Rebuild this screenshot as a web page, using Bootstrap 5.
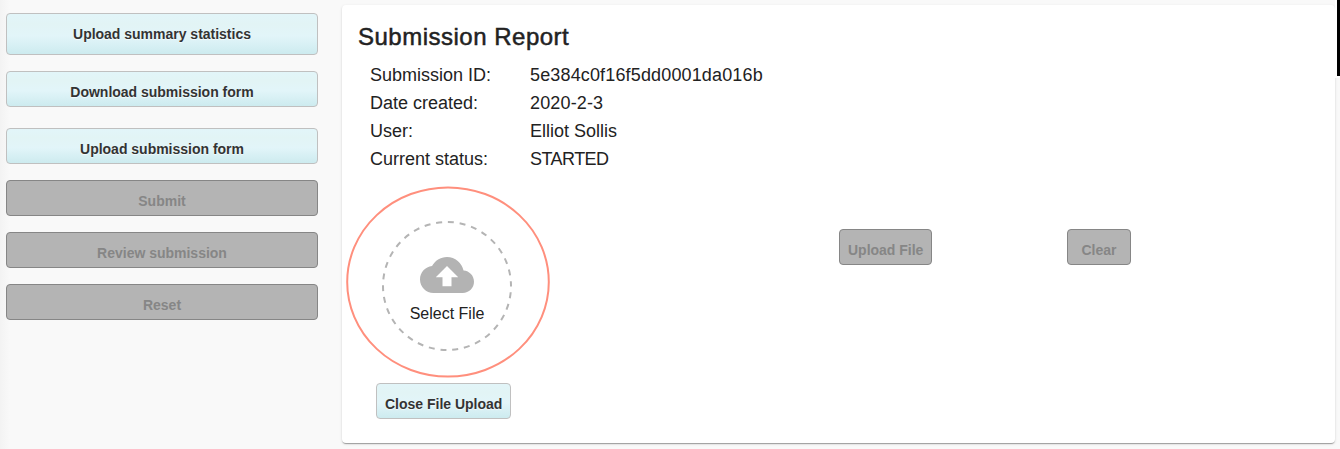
<!DOCTYPE html>
<html lang="en">
<head>
<meta charset="utf-8">
<meta name="viewport" content="width=device-width, initial-scale=1">
<title>Submission Report</title>
<link href="https://cdn.jsdelivr.net/npm/bootstrap@5.3.0/dist/css/bootstrap.min.css" rel="stylesheet">
<style>
body{height:449px;font-family:"Liberation Sans",Arial,sans-serif;color:#222;background:linear-gradient(90deg,#f3f3f3 0,#f9f9f9 10px,#f9f9f9 100%)}
.side{width:312px;margin:13px 0 0 6px}
.act{height:36px;padding:5px 8px 0;font-size:14px;font-weight:700;line-height:30px;letter-spacing:-.01px;border:1px solid #c0c0c0;border-radius:4px;color:#333;background:linear-gradient(#e2f5f9 0,#e2f4f5 25%,#e2f5f9 55%,#cdebef 100%);text-shadow:0 1px 1px rgba(255,255,255,.7);white-space:nowrap}
.act.tall{height:42px;padding:0 8px 1px}
.act:disabled{background:#b4b4b4;border-color:#868686;color:#868686;opacity:1;text-shadow:none}
.gap-form{margin-top:21px}
.panel{width:993px;height:438px;margin:5px 0 0 24px;padding:0 16px;border:0;border-radius:4px;box-shadow:0 2px 1px -1px rgba(0,0,0,.2),0 1px 1px rgba(0,0,0,.14),0 1px 3px rgba(0,0,0,.12)}
.title{font-size:24px;line-height:32px;font-weight:400;letter-spacing:.5px;margin:16px 0 8px;-webkit-text-stroke:.5px #222;white-space:nowrap}
.facts{display:grid;grid-template-columns:160px 1fr;grid-auto-rows:28px;font-size:18px;line-height:28px;margin:0 0 0 12px}
.facts dt{font-weight:400}
.facts dd,.facts dt{margin:0;white-space:nowrap}
.facts .code{letter-spacing:.15px}
.facts .state{letter-spacing:-.55px}
.upload{height:192px;margin-top:13px;margin-left:-12px}
.upload .act{margin-top:43px}
.send{width:93px;margin-left:289px}
.clear{width:64px;margin-left:135px}
.close-up{width:135px;margin:5px 0 0 18px}
.ring{width:204px;height:192px}
.ring .outline{left:0;top:0}
.drop{width:130px;height:130px;margin:8px 0 0 -2px}
.drop .cloud{margin-top:27px}
.drop .cap{font-size:16px;line-height:20px;margin-top:2px;white-space:nowrap}
.edge{right:0;top:0;width:5px;height:78px;background:#fff}
.edge::after{content:"";position:absolute;right:0;top:0;width:3px;height:76px;background:#000}
</style>
</head>
<body class="overflow-hidden position-relative">
<div class="d-flex align-items-start">
  <aside class="side d-flex flex-column flex-shrink-0">
    <button class="btn act tall w-100">Upload summary statistics</button>
    <button class="btn act w-100 mt-3">Download submission form</button>
    <button class="btn act w-100 gap-form">Upload submission form</button>
    <button class="btn act w-100 mt-3" disabled>Submit</button>
    <button class="btn act w-100 mt-3" disabled>Review submission</button>
    <button class="btn act w-100 mt-3" disabled>Reset</button>
  </aside>
  <main class="card panel flex-shrink-0">
    <h1 class="title">Submission Report</h1>
    <dl class="facts">
      <dt>Submission ID:</dt><dd class="code">5e384c0f16f5dd0001da016b</dd>
      <dt>Date created:</dt><dd class="code">2020-2-3</dd>
      <dt>User:</dt><dd>Elliot Sollis</dd>
      <dt>Current status:</dt><dd class="state">STARTED</dd>
    </dl>
    <div class="upload d-flex align-items-start">
      <div class="ring position-relative d-flex justify-content-center align-items-center flex-shrink-0">
        <svg class="outline position-absolute" width="204" height="192" viewBox="0 0 204 192"><ellipse cx="102" cy="96" rx="100.8" ry="94.6" fill="none" stroke="#ff8f7d" stroke-width="2"/></svg>
        <div class="drop position-relative d-flex flex-column align-items-center">
          <svg class="outline position-absolute" width="130" height="130" viewBox="0 0 130 130"><circle cx="65" cy="65" r="64" fill="none" stroke="#b4b4b4" stroke-width="2" stroke-dasharray="6 5.827" stroke-dashoffset="5.5"/></svg>
          <svg class="cloud" width="54" height="54" viewBox="0 0 24 24" fill="#b3b3b3"><path d="M19.35 10.04C18.67 6.59 15.64 4 12 4 9.11 4 6.6 5.64 5.35 8.04 2.34 8.36 0 10.91 0 14c0 3.31 2.69 6 6 6h13c2.76 0 5-2.24 5-5 0-2.64-2.05-4.78-4.65-4.96zM14 13v4h-4v-4H7l5-5 5 5h-3z"/></svg>
          <span class="cap">Select File</span>
        </div>
      </div>
      <button class="btn act send" disabled>Upload File</button>
      <button class="btn act clear" disabled>Clear</button>
    </div>
    <button class="btn act align-self-start close-up">Close File Upload</button>
  </main>
</div>
<div class="edge position-absolute"></div>
<script src="https://cdn.jsdelivr.net/npm/bootstrap@5.3.0/dist/js/bootstrap.bundle.min.js"></script>
</body>
</html>
